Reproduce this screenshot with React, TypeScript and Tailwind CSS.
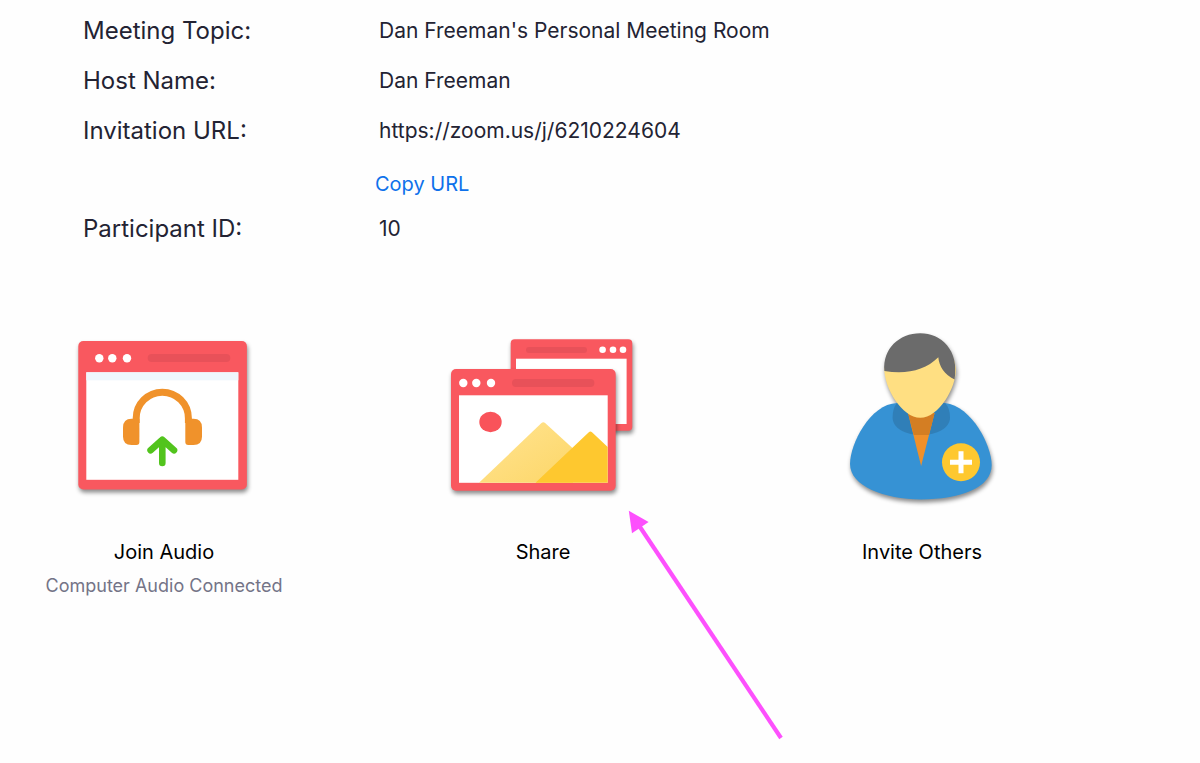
import type { ReactNode } from 'react';

const ICON = 'w-50 h-50 overflow-visible';
const SHADOW = 'drop-shadow-[1px_3px_2px_rgba(0,0,0,0.45)]';

function AudioIcon() {
  return (
    <svg className={ICON} viewBox="0 0 200 200" aria-hidden="true">
      <g className={SHADOW}>
        <rect x="14.3" y="21" width="168.6" height="148.5" rx="5" fill="#f9585f" />
      </g>
      <circle cx="35.3" cy="38.3" r="4.2" fill="#fff" />
      <circle cx="48.3" cy="38.3" r="4.2" fill="#fff" />
      <circle cx="63" cy="38.3" r="4.2" fill="#fff" />
      <rect x="83.7" y="34" width="82.6" height="8" rx="4" fill="#e85159" />
      <rect x="22.3" y="52.3" width="152" height="107.5" fill="#fff" />
      <rect x="22.3" y="52.3" width="152" height="8" fill="#eff6fc" />
      <path d="M72.2 103V98.3A26.1 26.1 0 0 1 124.4 98.3V103" fill="none" stroke="#f0922b" strokeWidth="7" />
      <path d="M75.4 98.8H67.5Q59 99 59 107.5V116.5Q59 125 67.5 125H72.4Q75.4 125 75.4 122Z" fill="#f0922b" />
      <path d="M121.3 98.8H129.5Q138 99 138 107.5V116.5Q138 125 129.5 125H124.3Q121.3 125 121.3 122Z" fill="#f0922b" />
      <path d="M98.3 143V120M86.6 130.2L98.3 119.8L110 130.2" fill="none" stroke="#52c41d" strokeWidth="6.6" strokeLinecap="round" strokeLinejoin="round" />
    </svg>
  );
}

function ShareIcon() {
  return (
    <svg className={ICON} viewBox="0 0 200 200" aria-hidden="true">
      <defs>
        <linearGradient id="hill" x1="0" y1="0" x2="1" y2="1">
          <stop offset="0.3" stopColor="#ffe085" />
          <stop offset="1" stopColor="#fcd668" />
        </linearGradient>
      </defs>
      <g className={SHADOW}>
        <rect x="67.7" y="19.3" width="121.6" height="91.4" rx="4" fill="#f9585f" />
      </g>
      <circle cx="159.6" cy="29.7" r="3.3" fill="#fff" />
      <circle cx="170" cy="29.7" r="3.3" fill="#fff" />
      <circle cx="180" cy="29.7" r="3.3" fill="#fff" />
      <rect x="83" y="27" width="61" height="6" rx="3" fill="#e85159" />
      <rect x="73" y="38.7" width="110.6" height="65.3" fill="#fff" />
      <g className={SHADOW}>
        <rect x="8" y="49" width="164.7" height="121.7" rx="5" fill="#f9585f" />
      </g>
      <circle cx="20.3" cy="63" r="4.2" fill="#fff" />
      <circle cx="33.3" cy="63" r="4.2" fill="#fff" />
      <circle cx="48" cy="63" r="4.2" fill="#fff" />
      <rect x="69" y="59" width="82.4" height="8" rx="4" fill="#e85159" />
      <rect x="16" y="75.3" width="148.7" height="87.5" fill="#fff" />
      <ellipse cx="47.5" cy="102" rx="11.2" ry="10.2" fill="#f9535a" />
      <path d="M36 162.8L98.5 103Q100.3 101.4 102.1 103L130 128.5V162.8Z" fill="url(#hill)" />
      <path d="M92.5 162.8L145.8 112.2Q147.3 110.6 149 112.2L164.7 127V162.8Z" fill="#fec82f" />
    </svg>
  );
}

function InviteIcon() {
  return (
    <svg className={ICON} viewBox="0 0 200 200" aria-hidden="true">
      <g className={SHADOW}>
        <path d="M75 83C48 84 28 124 28 144C28 166 62 179.4 99 179.4C138 179.4 169.7 168 169.7 145C169.7 126 150 86 123 83Z" fill="#3692d4" />
        <path d="M75 83Q70.6 88 70.6 97.5C70.6 108 83 115 99.2 115C115 115 128 108 128 97.5Q128 88 123 83Z" fill="#307fb8" />
        <path d="M86 93H112.6L99.1 146Z" fill="#f0902a" />
        <path d="M86 93H112.6L107 115H91.8Z" fill="#d47e23" />
        <path d="M62.3 49A36 36 0 0 1 134 49C134 68 117 97.8 98.3 97.8C80 97.8 62.3 68 62.3 49Z" fill="#ffdf82" />
        <path d="M62.4 51C60.5 29 77 13.3 98.3 13.3C119 13.3 137.5 30 132.6 59.5C122.5 55 117 46 116.3 37.3C103 50.5 84 54.8 62.4 51Z" fill="#6b6b6b" />
      </g>
      <circle cx="139" cy="142.2" r="19" fill="#fec82f" />
      <path d="M128 142.2H150M139 131.2V153.2" stroke="#fff" strokeWidth="5" />
    </svg>
  );
}

function Pointer() {
  return (
    <svg className="absolute left-[197px] top-[185px] w-[170px] h-[240px] pointer-events-none" viewBox="0 0 170 240" aria-hidden="true">
      <path d="M161 233L18 19" stroke="#fd50fd" strokeWidth="4.2" />
      <path d="M8.8 5.7L28.6 17L12 28.2Z" fill="#fd50fd" />
    </svg>
  );
}

function Row({ label, children }: { label: string; children: ReactNode }) {
  return (
    <div className="flex">
      <dt className="w-[296px] shrink-0 text-2xl leading-[50px]">{label}</dt>
      <dd className="text-[21px] leading-[50px]">{children}</dd>
    </div>
  );
}

function Action({ icon, title, note, children }: { icon: ReactNode; title: string; note?: string; children?: ReactNode }) {
  return (
    <div className="relative w-60 shrink-0">
      <button type="button" className="flex w-full flex-col items-center">
        {icon}
        <span className="mt-[15px] text-xl leading-[34px] text-black">{title}</span>
        {note && <span className="whitespace-nowrap text-lg leading-[34px] text-[#747487]">{note}</span>}
      </button>
      {children}
    </div>
  );
}

export default function App() {
  return (
    <main className="min-h-screen bg-[#fefefe] pt-1.5 font-['Inter',sans-serif] text-[#232333]">
      <dl className="pl-[83px]">
        <Row label="Meeting Topic:">Dan Freeman's Personal Meeting Room</Row>
        <Row label="Host Name:">Dan Freeman</Row>
        <Row label="Invitation URL:">
          https://zoom.us/j/6210224604
          <div className="-ml-1 h-12 pt-2.5">
            <button type="button" className="block text-xl leading-9 text-[#0e71eb]">Copy URL</button>
          </div>
        </Row>
        <Row label="Participant ID:">10</Row>
      </dl>

      <section className="mt-[66px] flex items-start justify-between pl-11 pr-[158px]">
        <Action icon={<AudioIcon />} title="Join Audio" note="Computer Audio Connected" />
        <Action icon={<ShareIcon />} title="Share">
          <Pointer />
        </Action>
        <Action icon={<InviteIcon />} title="Invite Others" />
      </section>
    </main>
  );
}
